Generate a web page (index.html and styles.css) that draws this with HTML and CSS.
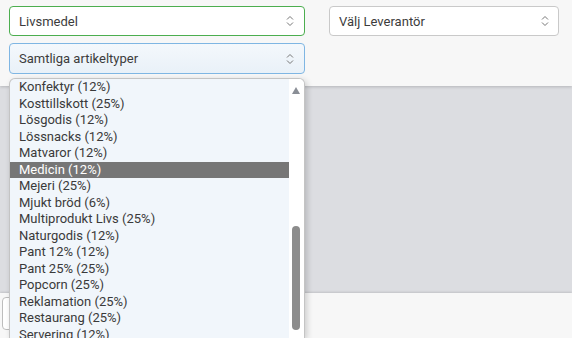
FILE: index.html
```html
<!DOCTYPE html>
<html lang="sv">
<head>
    <meta charset="UTF-8">
    <title>Artiklar</title>
    <link rel="stylesheet" href="styles.css">
</head>
<body>

    <div class="toolbar">
        <div class="filter-col">
            <div class="select select-ok">
                <span>Livsmedel</span>
                <svg class="chev" width="8" height="12" viewBox="0 0 8 12"><polyline points="1,4.5 4,1.5 7,4.5"/><polyline points="1,7.5 4,10.5 7,7.5"/></svg>
            </div>
            <div class="select select-focus">
                <span>Samtliga artikeltyper</span>
                <svg class="chev" width="8" height="12" viewBox="0 0 8 12"><polyline points="1,4.5 4,1.5 7,4.5"/><polyline points="1,7.5 4,10.5 7,7.5"/></svg>
            </div>
        </div>
        <div class="select supplier">
            <span>Välj Leverantör</span>
            <svg class="chev" width="8" height="12" viewBox="0 0 8 12"><polyline points="1,4.5 4,1.5 7,4.5"/><polyline points="1,7.5 4,10.5 7,7.5"/></svg>
        </div>
    </div>

    <div class="stage"></div>

    <div class="footer">
        <div class="footer-btn"></div>
    </div>

    <!-- open dropdown of the article type select -->
    <div class="listbox">
        <ul class="options">
            <li>Konfektyr (12%)</li>
            <li>Kosttillskott (25%)</li>
            <li>Lösgodis (12%)</li>
            <li>Lössnacks (12%)</li>
            <li>Matvaror (12%)</li>
            <li class="selected">Medicin (12%)</li>
            <li>Mejeri (25%)</li>
            <li>Mjukt bröd (6%)</li>
            <li>Multiprodukt Livs (25%)</li>
            <li>Naturgodis (12%)</li>
            <li>Pant 12% (12%)</li>
            <li>Pant 25% (25%)</li>
            <li>Popcorn (25%)</li>
            <li>Reklamation (25%)</li>
            <li>Restaurang (25%)</li>
            <li>Servering (12%)</li>
        </ul>
        <div class="scrollbar">
            <div class="arrow-up"></div>
            <div class="thumb"></div>
        </div>
    </div>

</body>
</html>
```

FILE: styles.css
```css
body {
    font-family: Roboto, "Liberation Sans", Arial, sans-serif;
    background-color: #dcdde1;
    margin: 0;
    padding: 0;
    height: 338px;
    overflow: hidden;
    display: flex;
    flex-direction: column;
    color: #3c3c3c;
}
.toolbar {
    background-color: #f7f7f7;
    height: 86px;
    box-sizing: border-box;
    padding: 6px 13px 0 9px;
    display: flex;
    gap: 24px;
    align-items: flex-start;
    box-shadow: 0 1px 3px rgba(0, 0, 0, 0.18);
    position: relative;
    z-index: 1;
}
.filter-col {
    display: flex;
    flex-direction: column;
    gap: 7px;
    width: 296px;
}
.select {
    height: 30px;
    box-sizing: border-box;
    border: 1px solid #c9c9c9;
    border-radius: 4px;
    background-color: #fff;
    display: flex;
    align-items: center;
    justify-content: space-between;
    padding: 0 10px 0 9px;
    font-size: 13px;
}
.select-ok {
    border-color: #4cae4f;
}
.select-focus {
    height: 31px;
    border-color: #7fb6e3;
    background: linear-gradient(#f4f8fc, #e9f1f8);
}
.supplier {
    width: 230px;
    padding-right: 9px;
}
.chev {
    fill: none;
    stroke: #777;
    stroke-width: 1;
}
.stage {
    height: 207px;
    background-color: #dcdde1;
}
.footer {
    flex: 1;
    background-color: #f7f7f7;
    padding: 4px 0 0 2px;
    box-shadow: 0 -1px 2px rgba(0, 0, 0, 0.12);
}
.footer-btn {
    width: 60px;
    height: 33px;
    box-sizing: border-box;
    border: 1px solid #bdbdbd;
    border-radius: 4px;
    background-color: #fff;
}
.listbox {
    position: absolute;
    left: 9px;
    top: 78px;
    width: 296px;
    height: 260px;
    box-sizing: border-box;
    border: 1px solid #c4c4c4;
    border-bottom: none;
    border-radius: 6px 6px 0 0;
    background-color: #f1f6fb;
    display: flex;
    overflow: hidden;
    z-index: 2;
    box-shadow: 2px 2px 6px rgba(0, 0, 0, 0.18);
}
.options {
    list-style: none;
    margin: 0;
    padding: 0;
    flex: 1;
    font-size: 13px;
    color: #3a3a3a;
}
.options li {
    height: 16.5px;
    line-height: 16.5px;
    padding-left: 9px;
    white-space: nowrap;
}
.options li.selected {
    background-color: #767676;
    color: #fff;
}
.scrollbar {
    width: 15px;
    background-color: #fff;
    position: relative;
}
.arrow-up {
    position: absolute;
    left: 3px;
    top: 8px;
    width: 0;
    height: 0;
    border-left: 4.5px solid transparent;
    border-right: 4.5px solid transparent;
    border-bottom: 7px solid #8a8e96;
}
.thumb {
    position: absolute;
    left: 3px;
    top: 147px;
    width: 8px;
    height: 104px;
    border-radius: 4px;
    background-color: #8c8c8c;
}
```
